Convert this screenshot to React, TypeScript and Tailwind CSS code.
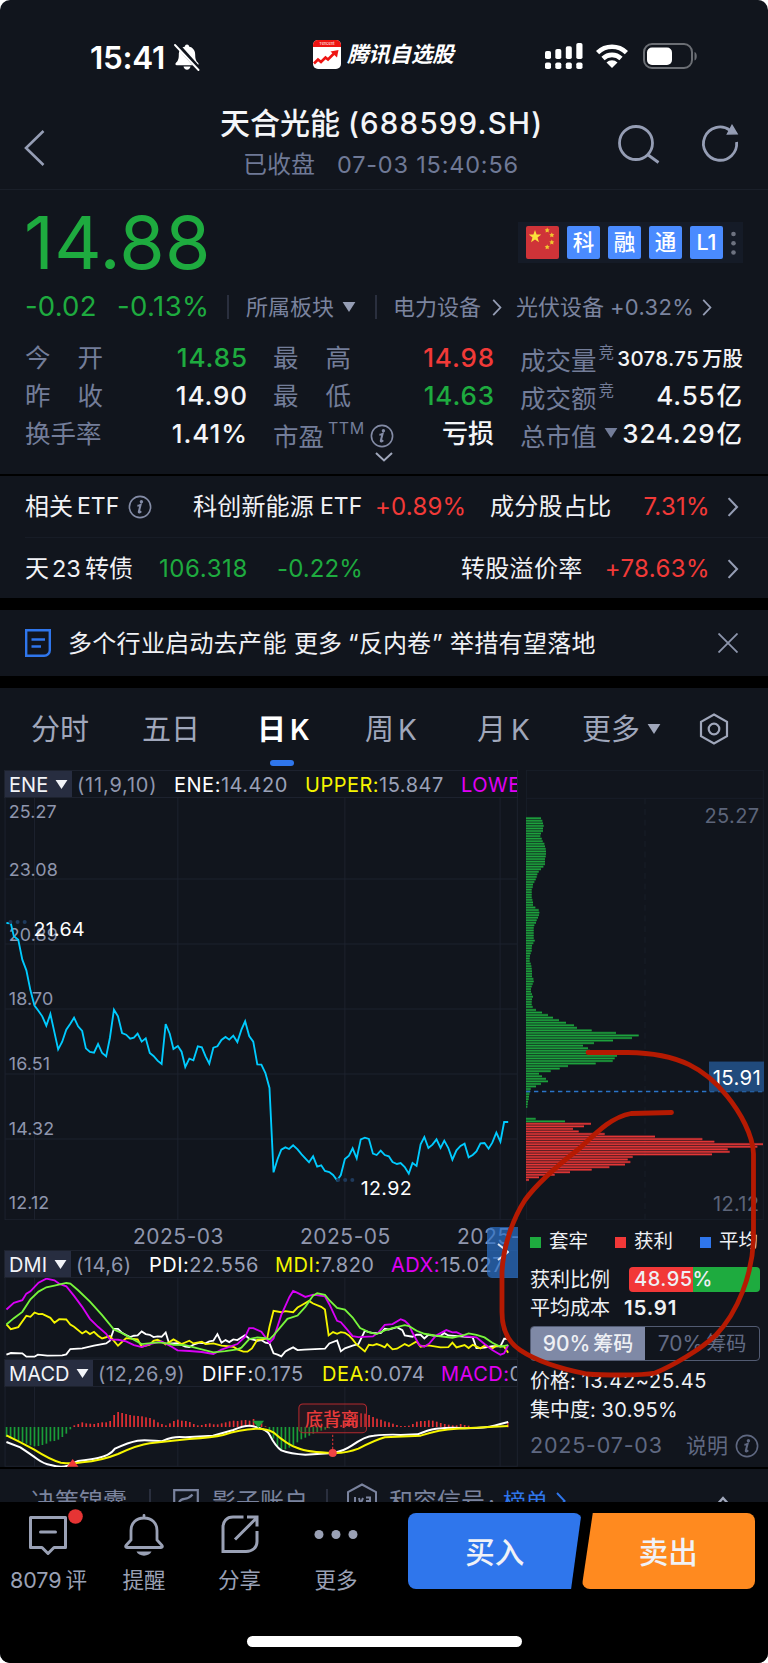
import type { ReactNode } from 'react'

/* ---------- chart data ---------- */

const pricePoints =
    '19,490 32,491 41,530 54,540 66,600 78,632 90,692 102,738 114,754 125,770 137,798 149,763 161,818 172,869 184,846 196,810 208,792 219,774 231,800 243,814 254,866 266,877 278,879 290,853 302,880 314,890 325,835 337,750 349,770 361,820 373,825 385,837 396,834 407,822 419,846 431,836 443,880 454,889 466,903 478,913 490,793 502,822 513,868 526,859 537,876 548,922 560,897 572,902 585,860 597,863 608,890 619,912 631,864 643,860 655,841 667,832 678,840 690,828 702,847 714,810 725,785 737,829 749,846 761,914 773,915 785,940 797,985 809,1238 821,1198 832,1170 844,1163 855,1168 867,1157 880,1169 892,1184 903,1196 914,1208 926,1190 938,1221 950,1217 961,1234 974,1237 985,1246 997,1262 1008,1246 1020,1198 1032,1188 1043,1166 1055,1196 1067,1139 1079,1134 1091,1138 1103,1182 1114,1186 1126,1173 1138,1186 1150,1190 1161,1207 1174,1213 1185,1210 1197,1222 1209,1242 1220,1210 1232,1219 1244,1154 1255,1132 1267,1165 1279,1155 1291,1139 1303,1165 1314,1143 1326,1165 1338,1200 1350,1172 1362,1159 1374,1152 1386,1193 1398,1186 1409,1175 1421,1151 1433,1150 1445,1167 1456,1149 1468,1119 1480,1146 1491,1087 1503,1087'

const dmiPdi =
    '19,434 32,429 66,430 78,440 102,440 112,434 140,437 184,436 196,433 208,417 243,415 278,407 314,400 325,392 337,356 349,356 361,368 373,375 385,381 396,377 407,376 419,364 431,372 443,374 454,381 466,379 478,380 490,367 500,400 512,400 525,399 548,410 560,411 572,404 590,398 608,400 619,394 631,392 643,372 655,398 667,390 678,396 690,388 702,390 725,375 737,386 761,392 773,390 785,398 797,400 809,430 821,434 832,439 844,424 855,418 867,412 880,420 900,419 961,416 974,400 997,391 1008,424 1020,415 1043,407 1060,402 1079,362 1091,366 1103,369 1126,369 1138,356 1150,358 1174,351 1190,360 1197,376 1220,380 1232,374 1244,374 1255,385 1267,374 1291,378 1303,377 1314,369 1326,376 1398,382 1409,414 1433,413 1456,408 1480,409 1491,386 1503,386'
const dmiMdi =
    '19,343 32,357 54,351 78,317 90,320 102,307 114,312 125,311 149,323 161,338 175,327 196,328 208,343 219,350 243,370 254,363 266,372 278,365 290,377 302,385 325,378 349,407 373,384 407,388 419,410 443,404 454,392 466,389 478,395 490,403 513,388 537,402 560,392 572,400 597,395 608,402 631,400 655,407 690,410 702,418 720,425 732,425 745,415 761,389 790,386 797,350 809,302 832,306 844,303 867,306 880,292 892,285 914,272 926,280 950,290 961,298 972,376 985,366 997,371 1008,366 1020,368 1032,376 1043,388 1055,404 1079,424 1091,404 1103,406 1114,402 1126,406 1138,412 1145,402 1161,418 1174,416 1197,402 1209,408 1232,394 1244,410 1267,406 1303,412 1326,411 1338,398 1350,412 1374,405 1386,414 1398,404 1421,415 1433,407 1456,415 1468,407 1491,410 1503,428'
const dmiAdx =
    '19,298 41,278 66,270 78,250 90,243 114,217 137,205 161,210 176,221 196,228 219,257 243,290 266,326 290,350 314,371 325,388 349,389 373,394 396,405 419,411 443,402 478,394 508,410 525,421 560,423 597,426 631,432 655,419 702,402 725,380 737,354 749,354 773,365 797,398 809,385 832,314 856,260 867,242 880,248 903,260 926,253 961,258 974,282 997,332 1008,336 1020,350 1043,378 1060,381 1103,379 1120,366 1138,344 1161,342 1185,327 1197,332 1209,343 1220,368 1240,405 1255,410 1270,400 1290,376 1320,360 1338,367 1350,366 1374,378 1409,382 1433,402 1456,420 1480,434 1491,430 1503,405'
const dmiAdxr =
    '19,343 41,324 66,305 90,267 114,244 137,231 161,226 196,218 208,220 231,240 266,274 302,315 337,358 361,369 385,383 419,402 466,397 490,399 513,404 548,405 585,415 631,427 666,423 702,418 714,413 737,387 761,382 785,384 797,388 809,376 832,348 850,326 880,316 903,290 926,256 938,249 961,254 974,270 997,293 1020,298 1043,322 1065,354 1091,366 1114,372 1138,361 1161,354 1197,345 1210,348 1232,362 1255,371 1290,377 1338,383 1374,374 1386,370 1409,374 1433,382 1456,398 1480,410 1503,405'

const macdDiff =
    'M19,694 L60,710 Q90,730 110,745 T150,763 Q180,772 200,765 L231,751 Q270,746 290,742 Q325,735 340,714 Q380,695 407,690 C430,686 450,690 478,692 C500,682 515,677 548,680 L630,675 L690,658 Q725,643 745,646 Q790,655 797,672 Q815,708 832,719 Q860,730 903,732 L985,727 Q1015,722 1040,705 Q1080,676 1105,675 Q1160,670 1185,673 L1235,671 Q1265,658 1290,654 Q1340,649 1374,653 L1410,652 Q1450,650 1480,640 L1503,634'
const macdDea =
    'M19,674 Q60,694 100,716 Q150,748 180,756 Q215,760 243,755 Q300,750 349,730 Q410,702 443,698 L510,690 L560,685 Q630,680 660,673 Q710,656 761,654 Q790,654 810,666 Q850,702 880,712 Q910,725 985,727 Q1025,728 1060,714 Q1110,688 1138,680 L1244,675 Q1300,656 1350,654 Q1420,650 1503,646'

// one entry per trading day, positive = red above the axis
const macdBars = [
    -30, -34, -37, -42, -46, -50, -55, -58, -57, -54, -50, -43, -42, -38, -30, -20, -7, 5, 9, 14, 11, 10, 9, 12, 14, 14, 18,
    36, 45, 42, 39, 36, 34, 33, 32, 29, 27, 22, 14, 9, 5, 11, 18, 22, 19, 18, 15, 9, 5, 6, 9, 11, 8, 8, 11, 14, 17, 19, 18,
    20, 21, 19, 24, 18, 11, 2, -9, -35, -57, -69, -67, -62, -54, -46, -37, -32, -26, -20, -15, -11, -8, -4, 2, 3, 6, 12, 20,
    30, 36, 41, 40, 36, 30, 25, 22, 17, 14, 10, 6, 3, 3, 4, 9, 16, 18, 18, 20, 19, 16, 12, 9, 7, 5, 5, 9, 6, 4,
]

// right edge of every chip-distribution row, from top to bottom
const chipSegments = [
    {
        y: 175,
        color: '#1eab3f',
        rows: [
            93, 97, 99, 101, 99, 99, 93, 91, 95, 98, 103, 105, 107, 108, 108, 107, 105, 105, 105, 100, 93, 86, 82, 80, 77,
            73, 69, 68, 65, 65, 65, 65, 67, 69, 69, 76, 86, 88, 87, 84, 80, 78, 73, 71, 71, 71, 71, 71, 74, 70, 66, 65, 65,
            62, 60, 59, 59, 62, 64, 65, 66, 66, 66, 70, 71, 68, 65, 63, 63, 66, 69, 66, 65, 65, 68,
        ],
    },
    {
        y: 751,
        color: '#1eab3f',
        rows: [
            78, 96, 114, 129, 147, 168, 192, 201, 245, 318, 386, 366, 309, 252, 219, 234, 240, 281, 321, 314, 308, 257, 174,
            149, 122, 87, 96, 108, 114, 93, 78, 62, 60, 58, 57, 56, 54, 53, 52,
        ],
    },
    { y: 1078, color: '#1eab3f', rows: [77, 165] },
    {
        y: 1093,
        color: '#f23838',
        rows: [
            243, 222, 189, 206, 284, 435, 577, 613, 759, 742, 653, 659, 606, 368, 353, 361, 345, 298, 245, 180, 134, 87, 57,
        ],
    },
]

const priceLabels = [
    { text: '25.27', y: 174 },
    { text: '23.08', y: 348 },
    { text: '20.89', y: 543 },
    { text: '18.70', y: 737 },
    { text: '16.51', y: 932 },
    { text: '14.32', y: 1126 },
    { text: '12.12', y: 1347 },
]

const GRID_X = [102, 526, 1020, 1479]

/* ---------- small pieces ---------- */

function Triangle({ className }: { className?: string }) {
    return (
        <svg viewBox="0 0 14 10" className={`shrink-0 ${className}`} preserveAspectRatio="none">
            <path d="M0.6 0h12.8L7 10z" fill="currentColor" />
        </svg>
    )
}

function ChevronRight({ className }: { className?: string }) {
    return (
        <svg viewBox="0 0 10 18" className={`shrink-0 ${className}`} fill="none" stroke="currentColor" strokeWidth="1.9">
            <path d="M1 1l7.6 8L1 17" />
        </svg>
    )
}

function InfoIcon({ className }: { className?: string }) {
    return (
        <svg viewBox="0 0 24 24" className={`shrink-0 ${className}`}>
            <circle cx="12" cy="12" r="10.6" fill="none" stroke="currentColor" strokeWidth="1.6" />
            <circle cx="13.4" cy="6.8" r="1.7" fill="currentColor" />
            <path d="M9.4 10.700c1.500-.1 2.300-.6 3.200-.9l-1.800 7c-.2 1.100.9.9 2.400-.6" fill="none" stroke="currentColor" strokeWidth="2" />
        </svg>
    )
}

function IndicatorHeader({ name, children, className }: { name: string; children: ReactNode; className: string }) {
    return (
        <div className="flex h-full w-full overflow-hidden border border-[#1d222e] text-[20px] leading-[28px] tracking-[0.5px] whitespace-nowrap">
            <div className={`flex h-full shrink-0 items-center justify-between bg-[#272d40] pr-[4px] pl-[4px] text-[#f2f4f8] ${className}`}>
                <span className="pt-[1px] tracking-[0.1px]">{name}</span>
                <Triangle className="h-[9px] w-[13px]" />
            </div>
            {children}
        </div>
    )
}

function Param({ label, value, color, className }: { label: string; value: string; color: string; className: string }) {
    return (
        <span className={`shrink-0 text-[#9aa1b8] ${className}`}>
            <span className={color}>{label}:</span>
            {value}
        </span>
    )
}

/* ---------- sections ---------- */

function StatusBar() {
    return (
        <div className="flex h-[114px] shrink-0 items-start pl-[90px] text-white">
            <div className="mt-[39px] w-[84px] text-[31.5px] leading-[38px] font-semibold tracking-[-0.3px]">15:41</div>
            <svg viewBox="0 0 26 28" className="mt-[43px] h-[28px] w-[26px] shrink-0">
                <path
                    d="M13 1.5c1.3 0 2 .8 2 2 4 1 6.200 4 6.200 8.200 0 5 1.200 6.500 3 8.200.8 1 .3 2.300-1 2.300H2.800c-1.300 0-1.800-1.300-1-2.300 1.800-1.700 3-3.200 3-8.200 0-4.200 2.200-7.200 6.200-8.200 0-1.200.7-2 2-2z"
                    fill="currentColor"
                />
                <path d="M9.500 23.600h7c-.4 2-1.700 3.200-3.500 3.200s-3.100-1.200-3.500-3.200z" fill="currentColor" />
                <path d="M3 1.500l22 24.500" stroke="#11151d" strokeWidth="4.500" />
                <path d="M1 2l23.500 25" stroke="currentColor" strokeWidth="1.900" strokeLinecap="round" />
            </svg>
            <svg viewBox="0 0 28 29" className="mt-[40px] ml-[113px] h-[29px] w-[28px] shrink-0">
                <rect width="28" height="29" rx="5" fill="#fff" />
                <path d="M0 7V5a5 5 0 015-5h18a5 5 0 015 5v2z" fill="#ee1411" />
                <text x="14" y="5" fontSize="4" fill="#fff" textAnchor="middle" fontFamily="Inter, sans-serif">
                    Tencent
                </text>
                <path d="M1 23.500l4-4 3 2.500 4.500-4.500 2.500 2 6-6" fill="none" stroke="#ee1411" strokeWidth="2.600" />
                <path d="M17.500 11.500l8-1.500-1.500 7.500z" fill="#ee1411" />
            </svg>
            <div className="mt-[39px] ml-[6px] w-[198px] text-[21.5px] leading-[30px] font-bold tracking-[-0.2px] italic">腾讯自选股</div>
            <svg viewBox="0 0 38 26" className="mt-[43px] h-[26px] w-[38px] shrink-0" fill="currentColor">
                <rect x="0" y="8" width="6" height="8" rx="1.800" />
                <rect x="10.300" y="6" width="6" height="10" rx="1.800" />
                <rect x="20.800" y="3.300" width="6" height="12.700" rx="1.800" />
                <rect x="31.300" y="0" width="6.200" height="16" rx="1.800" />
                <rect x="0" y="19.500" width="6" height="6.500" rx="1.800" />
                <rect x="10.300" y="19.500" width="6" height="6.500" rx="1.800" />
                <rect x="20.800" y="19.500" width="6" height="6.500" rx="1.800" />
                <rect x="31.300" y="19.500" width="6.200" height="6.500" rx="1.800" />
            </svg>
            <svg viewBox="0 0 34 25" className="mt-[44px] ml-[12px] h-[25px] w-[34px] shrink-0" fill="none" stroke="currentColor" strokeWidth="4.600">
                <path d="M2.600 8.600a20.800 20.800 0 0128.800 0" />
                <path d="M8 14.500a13 13 0 0118 0" />
                <path d="M17 24l-5.500-5.400a7.800 7.800 0 0111 0z" fill="currentColor" stroke="none" />
            </svg>
            <svg viewBox="0 0 56 26" className="mt-[43px] ml-[14px] h-[26px] w-[56px] shrink-0">
                <rect x="1" y="1" width="48" height="24" rx="8" fill="none" stroke="#6b6e74" strokeWidth="2" />
                <rect x="4" y="4.500" width="25" height="17.500" rx="5" fill="#fff" />
                <path d="M51.500 9c3 1 3 7.500 0 8.500z" fill="#6b6e74" />
            </svg>
        </div>
    )
}

function Header() {
    return (
        <div className="flex h-[76px] shrink-0 items-start border-b border-[#1a1f29] pl-[24px] text-[#959db4]">
            <svg viewBox="0 0 22 36" className="mt-[16px] h-[36px] w-[22px]" fill="none" stroke="currentColor" strokeWidth="2.600">
                <path d="M19.500 1L2 18l17.500 17" />
            </svg>
            <div className="ml-[172px] w-[330px] whitespace-nowrap">
                <div className="mt-[-10px] ml-[2px] flex h-[38px] items-center text-[30px] font-medium text-[#f4f5f8]">
                    <span className="w-[128px] shrink-0">天合光能</span>
                    <span className="text-[29.5px] tracking-[1.2px]">(688599.SH)</span>
                </div>
                <div className="mt-[8px] ml-[25px] flex h-[30px] items-center text-[24px] text-[#6f7996]">
                    <span className="w-[94px] shrink-0">已收盘</span>
                    <span className="text-[23.5px] tracking-[0.8px]">07-03 15:40:56</span>
                </div>
            </div>
            <svg viewBox="0 0 44 44" className="mt-[9px] ml-[68px] h-[44px] w-[44px]" fill="none" stroke="currentColor" strokeWidth="2.800">
                <circle cx="20" cy="20" r="16.500" />
                <path d="M31.500 31.500l11 8" />
            </svg>
            <svg viewBox="0 0 44 44" className="mt-[9px] ml-[40px] h-[44px] w-[44px]" fill="none" stroke="currentColor" strokeWidth="2.800">
                <path d="M30 7.300A16.600 16.600 0 1036.600 19" />
                <path d="M32 2.500l5 8.200-9.500.3z" fill="currentColor" strokeWidth="1.500" />
            </svg>
        </div>
    )
}

function StarFlag() {
    return (
        <svg viewBox="0 0 33 33" className="h-[33px] w-[33px]">
            <rect width="33" height="33" rx="2" fill="#cf3338" />
            <path d="M9 4l1.600 4.600h4.700L11.500 11.500l1.500 4.700L9 13.400l-4 2.800 1.500-4.700L2.700 8.600h4.700z" fill="#fbe03a" />
            <g fill="#f0c52e">
                <path d="M21.200 1.600l.8 1.600 1.700.2-1.200 1.300.3 1.800-1.600-.8-1.600.8.300-1.800-1.200-1.300 1.700-.2z" />
                <path d="M25.800 6.400l.8 1.600 1.700.2-1.200 1.300.3 1.800-1.600-.8-1.600.8.300-1.800-1.200-1.300 1.700-.2z" />
                <path d="M25.800 13.600l.8 1.600 1.700.2-1.200 1.300.3 1.800-1.600-.8-1.600.8.300-1.800-1.200-1.300 1.700-.2z" />
                <path d="M21.200 18.400l.8 1.600 1.700.2-1.200 1.300.3 1.800-1.600-.8-1.600.8.300-1.800-1.200-1.300 1.700-.2z" />
            </g>
        </svg>
    )
}

function Stat({ label, value, color }: { label: ReactNode; value: string; color: string }) {
    return (
        <div className="flex justify-between">
            <span>{label}</span>
            <span className={`-mr-px text-[26px] font-medium tracking-[0.9px] ${color}`}>{value}</span>
        </div>
    )
}

// two characters pushed out to the width of a three-character label
function SpreadLabel({ text }: { text: string }) {
    return (
        <span className="flex w-[78px] justify-between">
            <span>{text[0]}</span>
            <span>{text[1]}</span>
        </span>
    )
}

function Unit({ num, unit }: { num: string; unit: string }) {
    return (
        <span className="flex text-[26px] font-medium text-[#f4f5f8]">
            <span className="mr-[1px] tracking-[0.8px]">{num}</span>
            <span className="text-[25.500px]">{unit}</span>
        </span>
    )
}

function Quote() {
    return (
        <div className="h-[284px] shrink-0 pl-[25px] whitespace-nowrap">
            <div className="flex h-[92px] items-start">
                <div className="mt-[9px] ml-[-1px] w-[494px] text-[73.5px] leading-[88px] tracking-[0.3px] text-[#1eab3f]">14.88</div>
                <div className="mt-[32px] flex h-[41px] w-[225px] items-center gap-[8px] bg-[#151b27] pl-[8px]">
                    <StarFlag />
                    {['科', '融', '通', 'L1'].map((tag) => (
                        <span
                            key={tag}
                            className="flex h-[33px] w-[33px] items-center justify-center rounded-[2px] bg-[#4a8bff] text-[21.500px] font-medium text-white"
                        >
                            {tag}
                        </span>
                    ))}
                    <svg viewBox="0 0 6 24" className="h-[24px] w-[6px]" fill="#6d7280">
                        <circle cx="2.500" cy="3" r="2.300" />
                        <circle cx="2.500" cy="12.300" r="2.300" />
                        <circle cx="2.500" cy="21.500" r="2.300" />
                    </svg>
                </div>
            </div>

            <div className="flex h-[50px] items-center text-[22px] text-[#7a839e]">
                <span className="w-[92px] text-[27.500px] tracking-[0.2px] text-[#1eab3f]">-0.02</span>
                <span className="w-[110px] text-[27.500px] tracking-[0.4px] text-[#1eab3f]">-0.13%</span>
                <i className="h-[24px] w-[2px] bg-[#2a2f3e]" />
                <span className="ml-[17px] w-[96px]">所属板块</span>
                <Triangle className="h-[10px] w-[14px] text-[#959db4]" />
                <i className="ml-[19px] h-[24px] w-[2px] bg-[#2a2f3e]" />
                <span className="ml-[16px] w-[99px]">电力设备</span>
                <ChevronRight className="h-[17px] w-[10px] text-[#959db4]" />
                <span className="ml-[14px] w-[94px]">光伏设备</span>
                <span className="w-[92px] text-[22px] tracking-[0.3px]">+0.32%</span>
                <ChevronRight className="h-[17px] w-[10px] text-[#959db4]" />
            </div>

            <div className="mt-[7px] grid h-[116px] w-[717px] grid-cols-[222px_26px_221px_26px_222px] grid-rows-[38px_38px_37px] text-[25.500px] leading-[37px] text-[#737d99]">
                <Stat label={<SpreadLabel text="今开" />} value="14.85" color="text-[#1eab3f]" />
                <i />
                <Stat label={<SpreadLabel text="最高" />} value="14.98" color="text-[#f23a38]" />
                <i />
                <div className="flex">
                    <span className="mt-[3px]">成交量</span>
                    <span className="-mt-[5px] ml-[2px] text-[15.500px]">竞</span>
                    <span className="-mr-px ml-auto flex pt-px text-[20.500px] font-medium text-[#f4f5f8]">
                        <span className="mr-[3px] tracking-[0.3px]">3078.75</span>万股
                    </span>
                </div>
                <Stat label={<SpreadLabel text="昨收" />} value="14.90" color="text-[#f4f5f8]" />
                <i />
                <Stat label={<SpreadLabel text="最低" />} value="14.63" color="text-[#1eab3f]" />
                <i />
                <div className="flex">
                    <span className="mt-[3px]">成交额</span>
                    <span className="-mt-[5px] ml-[2px] text-[15.500px]">竞</span>
                    <span className="ml-auto">
                        <Unit num="4.55" unit="亿" />
                    </span>
                </div>
                <Stat label="换手率" value="1.41%" color="text-[#f4f5f8]" />
                <i />
                <div className="flex">
                    <span className="mt-[3px] w-[55px]">市盈</span>
                    <span className="-mt-[5px] w-[42px] text-[16px] tracking-[0.500px]">TTM</span>
                    <InfoIcon className="mt-[9px] h-[24px] w-[24px] text-[#848ca6]" />
                    <span className="ml-auto text-[26px] font-medium text-[#f4f5f8]">亏损</span>
                </div>
                <i />
                <div className="flex">
                    <span className="mt-[3px] w-[84px]">总市值</span>
                    <Triangle className="mt-[13px] h-[10px] w-[14px]" />
                    <span className="ml-auto">
                        <Unit num="324.29" unit="亿" />
                    </span>
                </div>
            </div>
            <svg viewBox="0 0 18 10" className="-mt-[3px] ml-[350px] h-[10px] w-[18px]" fill="none" stroke="#a0a7bb" strokeWidth="2">
                <path d="M1 1l8 7.500L17 1" />
            </svg>
        </div>
    )
}

function Related() {
    return (
        <div className="h-[124px] shrink-0 border-t-2 border-black pl-[25px] text-[24px] whitespace-nowrap text-[#f0f1f5]">
            <div className="flex h-[62px] items-center border-b border-[#171c26]">
                <span className="w-[52px]">相关</span>
                <span className="w-[51px] text-[23px]">ETF</span>
                <InfoIcon className="h-[24px] w-[24px] text-[#848ca6]" />
                <span className="ml-[41px] w-[127px] tracking-[0.2px]">科创新能源</span>
                <span className="w-[55px] text-[23px]">ETF</span>
                <span className="w-[115px] text-[24px] tracking-[0.2px] text-[#f23a38]">+0.89%</span>
                <span className="w-[122px] tracking-[0.3px]">成分股占比</span>
                <span className="w-[98px] text-right text-[24px] tracking-[0.3px] text-[#f23a38]">7.31%</span>
                <ChevronRight className="ml-[17px] h-[20px] w-[12px] text-[#959db4]" />
            </div>
            <div className="flex h-[61px] items-center">
                <span className="w-[27px]">天</span>
                <span className="w-[33px] text-[23.500px]">23</span>
                <span className="w-[74px]">转债</span>
                <span className="w-[118px] text-[24px] tracking-[0.6px] text-[#1eab3f]">106.318</span>
                <span className="w-[184px] text-[24px] tracking-[0.1px] text-[#1eab3f]">-0.22%</span>
                <span className="w-[130px] tracking-[0.3px]">转股溢价率</span>
                <span className="w-[119px] text-right text-[24px] tracking-[0.4px] text-[#f23a38]">+78.63%</span>
                <ChevronRight className="ml-[17px] h-[20px] w-[12px] text-[#959db4]" />
            </div>
        </div>
    )
}

function News() {
    return (
        <div className="flex h-[90px] shrink-0 items-center border-y-[12px] border-black pl-[25px] text-[24px] whitespace-nowrap text-[#f0f1f5]">
            <svg viewBox="0 0 26 28" className="h-[28px] w-[26px] shrink-0" fill="none" stroke="#2f76ec" strokeWidth="2.400">
                <path d="M1.200 1.200h23.600v20a5.600 5.600 0 01-5.600 5.600H1.200z" />
                <path d="M6.500 10.500h13.500M6.500 17.500h9.500" />
            </svg>
            <span className="mt-px ml-[17px] w-[226px] shrink-0 tracking-[0.3px]">多个行业启动去产能</span>
            <span className="mt-px w-[54px] shrink-0">更多</span>
            <span className="mt-px w-[11px] shrink-0">“</span>
            <span className="mt-px w-[73px] shrink-0">反内卷</span>
            <span className="mt-px w-[18px] shrink-0">”</span>
            <span className="mt-px w-[268px] shrink-0 tracking-[0.3px]">举措有望落地</span>
            <svg viewBox="0 0 20 20" className="h-[20px] w-[20px] shrink-0" fill="none" stroke="#8d95ac" strokeWidth="1.800">
                <path d="M0.500 0.500l19 19M19.500 0.500l-19 19" />
            </svg>
        </div>
    )
}

function Tabs() {
    return (
        <div className="flex h-[82px] shrink-0 items-start pl-[31px] text-[29px] leading-[84px] whitespace-nowrap text-[#a0a7bb]">
            <span className="w-[111px]">分时</span>
            <span className="w-[115px]">五日</span>
            <span className="flex w-[108px] flex-col font-semibold text-white">
                <span className="h-[72px]">
                    日<span className="ml-[4px] text-[28px]">K</span>
                </span>
                <i className="ml-[13px] h-[6px] w-[24px] rounded-[3px] bg-[#2f76ec]" />
            </span>
            <span className="w-[112px]">
                周<span className="ml-[4px] text-[28px]">K</span>
            </span>
            <span className="w-[105px]">
                月<span className="ml-[5px] text-[28px]">K</span>
            </span>
            <span className="w-[65px]">更多</span>
            <Triangle className="mt-[36px] h-[10px] w-[14px]" />
            <svg viewBox="0 0 30 32" className="mt-[25px] ml-[38px] h-[32px] w-[30px]" fill="none" stroke="currentColor" strokeWidth="2.200">
                <path d="M15 1.500l13 7.300v14.400l-13 7.300-13-7.300V8.800z" />
                <circle cx="15" cy="16" r="5.300" />
            </svg>
        </div>
    )
}

function PriceChart() {
    return (
        <svg viewBox="0 115 1532 1266" preserveAspectRatio="none" className="block h-[422px] w-[518px] shrink-0" fontFamily="Inter, sans-serif">
            <g stroke="#1d222e" strokeWidth="3">
                <path d="M15,115V1380H1530V115" fill="none" />
                {GRID_X.map((x) => (
                    <line key={x} x1={x} x2={x} y1={115} y2={1381} />
                ))}
                {[358, 553, 748, 943, 1138].map((y) => (
                    <line key={y} x1={15} x2={1530} y1={y} y2={y} />
                ))}
            </g>
            <g fill="#8f96ad" fontSize="53" letterSpacing="0.3">
                {priceLabels.map((l) => (
                    <text key={l.text} x="26" y={l.y}>
                        {l.text}
                    </text>
                ))}
            </g>
            <polyline points={pricePoints} fill="none" stroke="#00cbff" strokeWidth="5.500" />
            <g fill="#1f3a5c">
                <circle cx="31" cy="487" r="6" />
                <circle cx="52" cy="487" r="6" />
                <circle cx="73" cy="487" r="6" />
                <circle cx="1000" cy="1261" r="6" />
                <circle cx="1021" cy="1261" r="6" />
                <circle cx="1042" cy="1261" r="6" />
            </g>
            <g fill="#fff" fontSize="58" letterSpacing="1">
                <text x="99" y="529">21.64</text>
                <text x="1067" y="1305">12.92</text>
            </g>
        </svg>
    )
}

function DmiChart() {
    return (
        <svg viewBox="0 203 1532 244" preserveAspectRatio="none" className="block h-[81px] w-[518px] shrink-0">
            <g stroke="#1d222e" strokeWidth="3">
                <path d="M15,203V445M1530,203V445M15,444H1530" />
                {GRID_X.map((x) => (
                    <line key={x} x1={x} x2={x} y1={203} y2={444} />
                ))}
            </g>
            <g fill="none" strokeWidth="5.500">
                <polyline points={dmiPdi} stroke="#ffffff" />
                <polyline points={dmiMdi} stroke="#f5f500" />
                <polyline points={dmiAdx} stroke="#d800f5" />
                <polyline points={dmiAdxr} stroke="#78f53c" />
            </g>
        </svg>
    )
}

function MacdChart() {
    return (
        <svg viewBox="0 529 1532 240" preserveAspectRatio="none" className="block h-[80px] w-[518px] shrink-0">
            <g stroke="#1d222e" strokeWidth="3">
                <path d="M15,529V768M1530,529V768M15,767H1530" />
                {GRID_X.map((x) => (
                    <line key={x} x1={x} x2={x} y1={529} y2={768} />
                ))}
            </g>
            {macdBars.map((v, i) => (
                <rect
                    key={i}
                    x={17 + i * 11.78}
                    y={v > 0 ? 649 - v : 649}
                    width="5"
                    height={Math.abs(v)}
                    fill={v > 0 ? '#e23034' : '#1a9c38'}
                />
            ))}
            <rect x="1500" y="634" width="4" height="16" fill="#e23034" />
            <rect x="884" y="580" width="200" height="86" rx="12" fill="#5a1b22" fillOpacity="0.25" stroke="#b32a2f" strokeWidth="3" />
            <text x="902" y="645" fontSize="53" fontWeight="500" fill="#e83a3a" fontFamily="Noto Sans CJK SC, sans-serif">
                底背离
            </text>
            <path d={macdDiff} fill="none" stroke="#fff" strokeWidth="6" />
            <path d={macdDea} fill="none" stroke="#f5f500" strokeWidth="6" />
            <path d="M747,630h34l-17,22z" fill="#1a9c38" />
            <path d="M198,768h34l-17,-23z" fill="#f23a38" />
            <path d="M984,672V716" stroke="#e23034" strokeWidth="3" strokeDasharray="7 5" />
            <circle cx="984" cy="727" r="12" fill="#f04444" />
        </svg>
    )
}

function LeftCharts() {
    return (
        <div className="relative w-[518px] shrink-0">
            <div className="h-[28px] pl-[4px]">
                <IndicatorHeader name="ENE" className="w-[67px]">
                    <span className="ml-[5px] w-[97px] shrink-0 tracking-[0.8px] text-[#8f96ad]">(11,9,10)</span>
                    <Param label="ENE" value="14.420" color="text-white" className="w-[131px]" />
                    <Param label="UPPER" value="15.847" color="text-[#f5f500]" className="w-[156px]" />
                    <Param label="LOWER" value="12.993" color="text-[#e000f5]" className="w-[160px]" />
                </IndicatorHeader>
            </div>
            <PriceChart />
            <div className="flex h-[30px] items-center overflow-hidden pt-[3px] text-[21px] tracking-[0.5px] whitespace-nowrap text-[#8f96ad]">
                <span className="ml-[133px] w-[167px] shrink-0">2025-03</span>
                <span className="w-[157px] shrink-0">2025-05</span>
                <span className="shrink-0">2025-07</span>
            </div>
            <div className="h-[28px] pl-[4px]">
                <IndicatorHeader name="DMI" className="w-[66px]">
                    <span className="ml-[5px] w-[73px] shrink-0 text-[#8f96ad]">(14,6)</span>
                    <Param label="PDI" value="22.556" color="text-white" className="w-[126px]" />
                    <Param label="MDI" value="7.820" color="text-[#f5f500]" className="w-[116px]" />
                    <Param label="ADX" value="15.027" color="text-[#e000f5]" className="w-[126px]" />
                </IndicatorHeader>
            </div>
            <DmiChart />
            <div className="h-[28px] pl-[4px]">
                <IndicatorHeader name="MACD" className="w-[88px]">
                    <span className="ml-[5px] w-[104px] shrink-0 text-[#8f96ad]">(12,26,9)</span>
                    <Param label="DIFF" value="0.175" color="text-white" className="w-[120px]" />
                    <Param label="DEA" value="0.074" color="text-[#f5f500]" className="w-[119px]" />
                    <Param label="MACD" value="0.202" color="text-[#e000f5]" className="w-[130px]" />
                </IndicatorHeader>
            </div>
            <MacdChart />
            {/* collapse handle lies over the date row and the DMI header */}
            <div className="absolute top-[457px] right-0 flex h-[51px] w-[31px] justify-center rounded-l-[5px] bg-[#2b72cc]/70 pt-[16px]">
                <svg viewBox="0 0 12 18" className="h-[18px] w-[12px]" fill="none" stroke="#dfe8f5" strokeWidth="2">
                    <path d="M1 1l10 8-10 8" />
                </svg>
            </div>
        </div>
    )
}

function ChipChart() {
    return (
        <svg viewBox="48 30 714 1352" className="block h-[450px] w-[238px] shrink-0" preserveAspectRatio="none" fontFamily="Inter, sans-serif">
            <g fill="none" stroke="#191e29" strokeWidth="3">
                <rect x="49" y="31" width="711" height="1350" />
                <path d="M48,115H762" />
                <path d="M405,115V1381" strokeDasharray="18 14" />
            </g>
            {chipSegments.map((s) =>
                s.rows.map((edge, i) => (
                    <g key={`${s.y}-${i}`} fill={s.color}>
                        <rect x="48" y={s.y - 4 + i * 7.66} width={edge - 48} height="7.66" opacity="0.4" />
                        <rect x="48" y={s.y - 2 + i * 7.66} width={edge - 48} height="4" opacity="0.9" />
                    </g>
                )),
            )}
            <path d="M48,996H762" stroke="#2a74c8" strokeWidth="4.500" strokeDasharray="13 11" />
            <rect x="597" y="906" width="165" height="90" fill="#204a7c" />
            <g textAnchor="end">
                <text x="753" y="975" fontSize="61" letterSpacing="1" fill="#fff">
                    15.91
                </text>
                <text x="748" y="188" fontSize="60" letterSpacing="1" fill="#5c6479">
                    25.27
                </text>
                <text x="748" y="1355" fontSize="60" letterSpacing="1" fill="#5c6479">
                    12.12
                </text>
            </g>
        </svg>
    )
}

function ChipPanel() {
    return (
        <div className="ml-[8px] w-[238px] shrink-0 whitespace-nowrap text-[#eef0f4]">
            <ChipChart />
            <div className="mt-[7px] ml-[4px] flex h-[30px] items-center overflow-hidden text-[19.500px]">
                <i className="h-[11px] w-[11px] shrink-0 bg-[#1eab3f]" />
                <span className="ml-[8px] w-[66px] shrink-0">套牢</span>
                <i className="h-[11px] w-[11px] shrink-0 bg-[#f23838]" />
                <span className="ml-[8px] w-[66px] shrink-0">获利</span>
                <i className="h-[11px] w-[11px] shrink-0 bg-[#2f76ec]" />
                <span className="ml-[8px] shrink-0">平均</span>
            </div>
            <div className="mt-[9px] ml-[4px] flex h-[26px] items-center text-[20px]">
                <span className="mt-px w-[99px]">获利比例</span>
                <span className="flex h-[25px] w-[131px] items-center rounded-[4px] bg-[linear-gradient(to_right,#f23838_64px,#1eab3f_64px)] pl-[5px] font-medium tracking-[0.5px]">
                    48.95%
                </span>
            </div>
            <div className="mt-[3px] ml-[4px] flex h-[26px] items-center text-[20px]">
                <span className="w-[94px]">平均成本</span>
                <span className="text-[20.500px] font-semibold tracking-[0.8px]">15.91</span>
            </div>
            <div className="mt-[5px] ml-[4px] flex h-[35px] w-[230px] items-center overflow-hidden rounded-[4px] border border-[#525b72] text-[21px]">
                <span className="flex h-full w-[114px] items-center justify-center bg-[#7f89a6] pt-px font-medium">
                    90%<span className="ml-[3px] text-[20px]">筹码</span>
                </span>
                <span className="flex w-[114px] items-center justify-center pt-px text-[#626b84]">
                    70%<span className="ml-[3px] text-[20px]">筹码</span>
                </span>
            </div>
            <div className="mt-[6px] ml-[4px] h-[29px] text-[20px] leading-[29px]">
                价格: <span className="tracking-[0.7px]">13.42~25.45</span>
            </div>
            <div className="ml-[4px] h-[29px] text-[20px] leading-[28px]">
                集中度: <span className="tracking-[0.4px]">30.95%</span>
            </div>
            <div className="mt-[6px] ml-[4px] flex h-[29px] items-center text-[21.500px] text-[#5f6881]">
                <span className="w-[156px] tracking-[0.8px]">2025-07-03</span>
                <span className="w-[49px] text-[21px]">说明</span>
                <InfoIcon className="h-[24px] w-[24px]" />
            </div>
        </div>
    )
}

function ToolStrip() {
    return (
        <div className="flex h-[35px] shrink-0 items-start overflow-hidden border-t-2 border-black pl-[31px] text-[24px] leading-[36px] whitespace-nowrap text-[#7a839e]">
            <span className="mt-[15px] w-[118px]">决策锦囊</span>
            <i className="mt-[20px] h-[24px] w-[2px] bg-[#2a2f3e]" />
            <svg viewBox="0 0 26 26" className="mt-[20px] ml-[22px] h-[26px] w-[26px]" fill="none" stroke="currentColor" strokeWidth="2.200">
                <path d="M1.200 1.200h23.600v23.600H1.200z" />
                <path d="M6 13c4-6 7 0 13.500-7.500" />
            </svg>
            <span className="mt-[15px] ml-[13px] w-[114px]">影子账户</span>
            <i className="mt-[20px] h-[24px] w-[2px] bg-[#2a2f3e]" />
            <svg viewBox="0 0 32 34" className="mt-[14px] ml-[18px] h-[34px] w-[32px]" fill="none" stroke="currentColor" strokeWidth="2">
                <path d="M16 1.500l14 7.500v15.500L16 32 2 24.500V9z" />
                <path d="M9 14v7M13 15l1.500 6 2.500-6M20 14.500h4v3.500h-3v4" />
            </svg>
            <span className="mt-[15px] ml-[11px] w-[99px]">和容信号</span>
            <span className="mt-[15px] w-[15px]">·</span>
            <span className="mt-[15px] w-[52px] text-[22.500px] text-[#2f76ec]">榜单</span>
            <ChevronRight className="mt-[23px] h-[18px] w-[12px] text-[#2f76ec]" />
            <svg viewBox="0 0 18 12" className="mt-[27px] ml-[147px] h-[12px] w-[18px]" fill="none" stroke="#a0a7bb" strokeWidth="2.400">
                <path d="M1 11l8-9 8 9" />
            </svg>
        </div>
    )
}

function BarItem({ label, children, className }: { label: ReactNode; children: ReactNode; className: string }) {
    return (
        <div className={`flex flex-col items-center whitespace-nowrap ${className}`}>
            <div className="mt-[11px] flex h-[52px] items-start">{children}</div>
            <span>{label}</span>
        </div>
    )
}

function BottomBar() {
    return (
        <div className="flex h-[161px] shrink-0 flex-col bg-black text-[#9aa1b5]">
            <div className="flex h-[134px] items-start text-[21.500px] leading-[30px]">
                <BarItem
                    label={
                        <>
                            8079<span className="ml-[4px]">评</span>
                        </>
                    }
                    className="w-[97px]"
                >
                    <svg viewBox="0 0 60 42" className="h-[42px] w-[60px] overflow-visible" fill="none" stroke="currentColor" strokeWidth="3">
                        <path d="M11.500 4.500h35v30h-11.500l-6 6-6-6h-11.500z" strokeLinejoin="round" />
                        <path d="M21.500 19h15" strokeLinecap="round" />
                        <circle cx="56.500" cy="3.500" r="7.300" fill="#e63434" stroke="none" />
                    </svg>
                </BarItem>
                <BarItem label="提醒" className="w-[94px]">
                    <svg viewBox="0 0 42 44" className="h-[44px] w-[42px]" fill="none" stroke="currentColor" strokeWidth="2.800">
                        <path
                            d="M21 5c8 0 13 5 13 12.500V27l5 5.500c.7 1 .3 2-1 2H4c-1.300 0-1.700-1-1-2L8 27v-9.500C8 10 13 5 21 5zM21 5V2.500"
                            strokeLinecap="round"
                        />
                        <path d="M13.500 38.500h15c-2 5.500-13 5.500-15 0z" fill="currentColor" stroke="none" />
                    </svg>
                </BarItem>
                <BarItem label="分享" className="w-[97px]">
                    <svg viewBox="0 0 40 42" className="h-[42px] w-[40px]" fill="none" stroke="currentColor" strokeWidth="3">
                        <path d="M23.500 4H13C6.500 4 3 8.500 3 14v24.500h23c6.500 0 11-4 11-10V18" />
                        <path d="M15 26.500L36 5.500M27 4h10v9.500" />
                    </svg>
                </BarItem>
                <BarItem label="更多" className="w-[96px]">
                    <svg viewBox="0 0 44 42" className="h-[42px] w-[44px]" fill="currentColor">
                        <circle cx="5" cy="21.500" r="4.500" />
                        <circle cx="22" cy="21.500" r="4.500" />
                        <circle cx="39" cy="21.500" r="4.500" />
                    </svg>
                </BarItem>
                <div className="mt-[11px] ml-[24px] flex h-[76px] w-[347px] text-[29.500px] font-medium text-[#f0f2f7]">
                    <button className="h-full w-[174px] rounded-[8px] bg-[#2f76ec] pt-[2px] [clip-path:polygon(0_0,100%_0,94%_100%,0_100%)]">买入</button>
                    <button className="h-full w-[174px] rounded-[8px] bg-[#ff8a1f] pt-[2px] [clip-path:polygon(6.500%_0,100%_0,100%_100%,0_100%)]">卖出</button>
                </div>
            </div>
            <div className="ml-[247px] h-[11px] w-[275px] rounded-full bg-white" />
        </div>
    )
}

// hand-drawn marker stroke round the chip distribution
function Scribble() {
    return (
        <svg viewBox="0 0 768 1663" className="pointer-events-none absolute top-0 left-0 h-[1663px] w-[768px]">
            <path
                d="M588 1052.500H628C680 1053 706 1070 727 1096C740 1112 753 1135 753.500 1154V1240C752 1275 738 1312 716 1335C700 1350 672 1366 655 1373C640 1376 600 1375 587 1374C556 1368 535 1360 520 1350C505 1340 502 1325 502 1312V1272C503 1248 512 1220 525 1200C538 1182 562 1162 580 1148C598 1131 612 1117 631 1113.500L671.500 1112.500"
                fill="none"
                stroke="#b51a02"
                strokeWidth="4.800"
                strokeLinecap="round"
                strokeLinejoin="round"
            />
        </svg>
    )
}

export default function App() {
    return (
        <div className="h-[1663px] w-[768px] overflow-hidden bg-white font-['Inter','Noto_Sans_CJK_SC',sans-serif]">
            <div className="relative flex h-full w-full flex-col overflow-hidden rounded-[10px] bg-[#11151d]">
                <StatusBar />
                <Header />
                <Quote />
                <Related />
                <News />
                <Tabs />
                <div className="flex h-[697px] shrink-0">
                    <LeftCharts />
                    <ChipPanel />
                </div>
                <ToolStrip />
                <BottomBar />
                <Scribble />
            </div>
        </div>
    )
}
